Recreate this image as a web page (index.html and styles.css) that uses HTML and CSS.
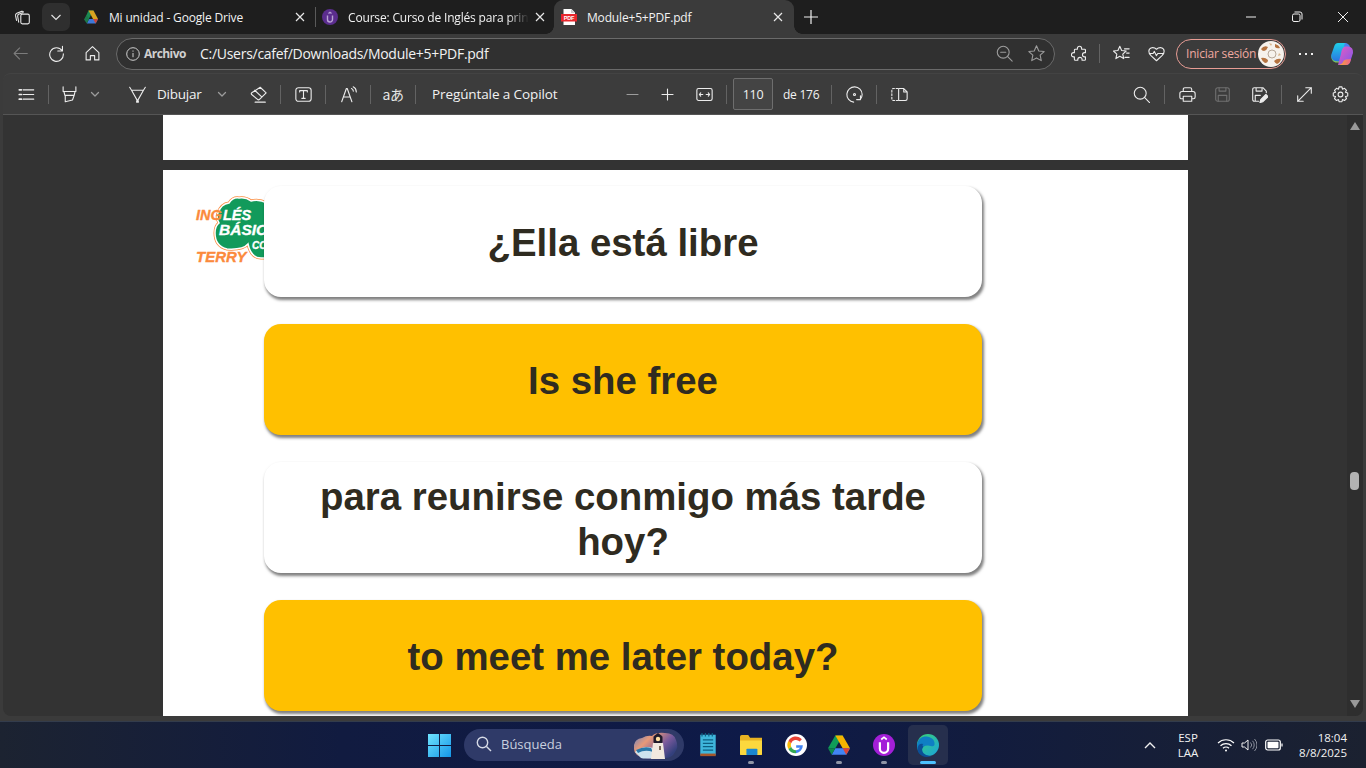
FILE: index.html
```html
<!DOCTYPE html>
<html lang="es">
<head>
<meta charset="utf-8">
<title>Module+5+PDF.pdf</title>
<link rel="stylesheet" href="styles.css">
</head>
<body>
<div class="tabbar">
  <span class="ic i20 first"><svg viewBox="0 0 20 20"><rect x="8" y="6" width="10" height="11.500" rx="1.800"/><path d="M5.500 15.500 4.300 8.500Q4 6.500 6 5.800l4.500-1.400M3 13.500 1.800 7.800Q1.500 5.800 3.300 5L9 2.800q1.300-.4 2 .6"/></svg></span>
  <span class="chevbtn"><svg viewBox="0 0 12 12"><path d="M1.500 4l4.500 4.500L10.500 4"/></svg></span>
  <div class="tab tab-a">
    <svg class="fav" viewBox="0 0 16 16"><path d="M5.500 1.500h5l-5 9H1.500z" fill="#1b8a52"/><path d="M5.500 1.500h5l4.500 8.500h-5z" fill="#d9a520"/><path d="M3.800 14.500l2.300-4.500h8.900l-2.300 4.500z" fill="#3d78d8"/><path d="M1 10.500l2.800 4 2.300-4.500-2.400-4z" fill="#1b7a4a"/><path d="M15 10l-2.300 4.500L10 10z" fill="#c9463a"/></svg>
    <span class="title">Mi unidad - Google Drive</span>
    <svg class="close" viewBox="0 0 10 10"><path d="M1 1l8 8M9 1l-8 8"/></svg>
  </div>
  <span class="tabsep"></span>
  <div class="tab tab-b">
    <svg class="fav" viewBox="0 0 16 16"><circle cx="8" cy="8" r="8" fill="#5b2d8e"/><path d="M5.500 6.500v4a2.500 2.500 0 0 0 5 0v-4M6.500 4.500 8 3.300l1.500 1.200" fill="none" stroke="#b9a4d4" stroke-width="1.400"/></svg>
    <span class="title fade">Course: Curso de Inglés para princ</span>
    <svg class="close" viewBox="0 0 10 10"><path d="M1 1l8 8M9 1l-8 8"/></svg>
  </div>
  <div class="tab tab-active">
    <svg class="fav" viewBox="0 0 16 16"><path d="M2.500 0h8l3.500 3.500V16h-11.500z" fill="#fff"/><path d="M10 0l4 4h-4z" fill="#ccc"/><rect x="0" y="5" width="16" height="7.500" fill="#e8262c"/><text x="8" y="11" class="pdftxt">PDF</text></svg>
    <span class="title">Module+5+PDF.pdf</span>
    <svg class="close" viewBox="0 0 10 10"><path d="M1 1l8 8M9 1l-8 8"/></svg>
  </div>
  <svg class="plus" viewBox="0 0 14 14"><path d="M7 0v14M0 7h14"/></svg>
  <div class="winctl">
    <span class="wc"><svg viewBox="0 0 12 12"><path d="M1 6h10"/></svg></span>
    <span class="wc"><svg viewBox="0 0 12 12"><rect x="1.500" y="3" width="7.500" height="7.500" rx="1.500"/><path d="M3.500 1h5.500a2 2 0 0 1 2 2v5.500"/></svg></span>
    <span class="wc"><svg viewBox="0 0 12 12"><path d="M1 1l10 10M11 1 1 11"/></svg></span>
  </div>
</div>

<div class="addr">
  <span class="ic i20 dim"><svg viewBox="0 0 20 20"><path d="M18 10H2.500M9 3.500 2.500 10 9 16.500"/></svg></span>
  <span class="ic i20 m16"><svg viewBox="0 0 20 20"><path d="M16.500 6.500A8 8 0 1 0 18 10.500M17 1.500V7h-5.500"/></svg></span>
  <span class="ic i20 m16"><svg viewBox="0 0 20 20"><path d="M2.500 9 10 2l7.500 7v8.500h-5v-5h-5v5h-5z"/></svg></span>
  <div class="pill">
    <svg class="infoic" viewBox="0 0 14 14"><circle cx="7" cy="7" r="6.300"/><path d="M7 6v4.200M7 3.500v1.200"/></svg>
    <span class="scheme">Archivo</span>
    <span class="url">C:/Users/cafef/Downloads/Module+5+PDF.pdf</span>
    <span class="pillend">
      <span class="ic i20 grey"><svg viewBox="0 0 20 20"><circle cx="8.500" cy="8.500" r="7"/><path d="M13.500 13.500l5.500 5.500M5.500 8.500h6"/></svg></span>
      <span class="ic i20 grey m12"><svg viewBox="0 0 20 20"><path d="M10 1l2.700 6 6.300.7-4.700 4.300 1.300 6.400-5.600-3.200-5.600 3.200 1.300-6.400L1 7.700 7.300 7z"/></svg></span>
    </span>
  </div>
  <span class="ic i20 m14"><svg viewBox="0 0 20 20"><path d="M7.500 4a2.500 2.500 0 0 1 5 0v1H16q1 0 1 1v3h-1a2.500 2.500 0 0 0 0 5h1v3q0 1-1 1h-3v-1a2.500 2.500 0 0 0-5 0v1H5q-1 0-1-1v-3H3a2.500 2.500 0 0 1 0-5h1V6q0-1 1-1h2.500z"/></svg></span>
  <span class="sep m10"></span>
  <span class="ic i20 m11"><svg viewBox="0 0 20 20"><path d="M8 1.500l2.200 5 5.300.6-4 3.600 1.100 5.300L8 13.300 3.400 16l1.100-5.300-4-3.600 5.300-.6zM13.500 4.500H19M16 9.500h3M14 14.500h5"/></svg></span>
  <span class="ic i20 m15"><svg viewBox="0 0 20 20"><path d="M3.500 12.500Q1 10 1 7.300 1 4 4.500 3.200 7.800 2.800 10 5q2.200-2.200 5.500-1.800Q19 4 19 7.300q0 2.700-2.500 5.200L10 18.500zM1.500 10H6l1.500-2.500 2.300 5 1.700-2.500h7"/></svg></span>
  <div class="signin"><span>Iniciar sesión</span>
    <svg class="avatar" viewBox="0 0 26 26"><circle cx="13" cy="13" r="13" fill="#f6f2ec"/><path d="M3 8q3-4 7-2-1 3-4 4-2 0-3-2zM17 3q4 1 5 4-3 1-5-1zM3 17q4-1 7 2 0 3-3 3-3-2-4-5zM16 20q3-3 7-2-1 4-4 5-2-1-3-3z" fill="#b57340"/><path d="M11 2l3 1-1 2zM21 12l2 2-3 1z" fill="#d8b48c"/><circle cx="14" cy="13" r="4" fill="none" stroke="#a79684" stroke-width=".8"/></svg>
  </div>
  <span class="dots"><i></i><i></i><i></i></span>
  <svg class="copilot" viewBox="0 0 24 24"><defs><linearGradient id="cpa" x1="0" y1="0" x2="0" y2="1"><stop offset="0" stop-color="#1fd0e8"/><stop offset="1" stop-color="#2a74e0"/></linearGradient><linearGradient id="cpb" x1="0" y1="0" x2="1" y2="1"><stop offset="0" stop-color="#ea5cc0"/><stop offset="1" stop-color="#7a58ec"/></linearGradient><linearGradient id="cpc" x1="0" y1="0" x2="1" y2="0"><stop offset="0" stop-color="#4fc86c"/><stop offset="1" stop-color="#f4c52e"/></linearGradient><linearGradient id="cpd" x1="0" y1="0" x2="1" y2="0"><stop offset="0" stop-color="#f4b02e"/><stop offset="1" stop-color="#f0608a"/></linearGradient></defs><path d="M1.200 13q-.4 6 4.300 7.500H13l2-5H6q-3 0-4.800-2.500z" fill="url(#cpc)"/><path d="M8 1h8l-3 14.500q-1 4-5 4-7-.5-6.800-6.500L4 5q1-4 4-4z" fill="url(#cpa)"/><path d="M15 1q4 .3 5 4l1 3-5 .5-2-5z" fill="#4a80ee"/><path d="M15.500 4.500h3q5 .6 4.500 6.500l-2.600 8q-1 4-4.400 4H8l3-11q1-7.500 4.500-7.500z" fill="url(#cpb)"/><path d="M8 23h8q3.500 0 4.500-4l.5-2-5 .5q-1.500 0-2.500 1.500-1 3.500-5.500 4z" fill="url(#cpd)"/></svg>
</div>

<div class="pdfbar">
  <span class="ic i20"><svg viewBox="0 0 20 20"><path d="M6 4.500h12.500M6 10h12.500M6 15.500h12.500"/><path class="fatdot" d="M1.500 4.500h2.500M1.500 10h2.500M1.500 15.500h2.500"/></svg></span>
  <span class="sep m12"></span>
  <span class="ic i20 m10"><svg viewBox="0 0 20 20"><path d="M2.500 1v5.500h15V1M3.500 6.500l1 4.500h11l1-4.500M5 11v7.500l8.500-2L15.500 11"/></svg></span>
  <span class="ic i12 m10 grey"><svg viewBox="0 0 12 12"><path d="M2.500 4.500 6 8l3.500-3.500"/></svg></span>
  <span class="ic i20 m26"><svg viewBox="0 0 20 20"><path d="M.8 1.500 3 5h14l2.200-3.500M3 5l7 12.500L17 5M9 17.500h2v1.500H9z"/></svg></span>
  <span class="lbl w50 m10">Dibujar</span>
  <span class="ic i12 m9 grey"><svg viewBox="0 0 12 12"><path d="M2.500 4.500 6 8l3.500-3.500"/></svg></span>
  <span class="ic i20 m20"><svg viewBox="0 0 20 20"><path d="M12 1.500 19 8l-7.500 7.500Q10 17 8.500 15.500L2 10q-1-1 0-2zM5.500 5l8 7.500M6 19h12"/></svg></span>
  <span class="sep m12"></span>
  <span class="ic i20 m12"><svg viewBox="0 0 20 20"><rect x="1" y="2" width="18" height="16" rx="3"/><path d="M5.500 7V5.500h9V7M10 5.500V14.500M8 14.500h4"/></svg></span>
  <span class="sep m12"></span>
  <span class="ic i20 m12"><svg viewBox="0 0 20 20"><path d="M2 18.500 7.500 3h1L14 18.500M4.300 13h7.400M13.500 3q2 .8 2.200 3M15.500 1q3.500 1.500 3.700 6"/></svg></span>
  <span class="sep m12"></span>
  <span class="trans m12">aあ</span>
  <span class="sep m12"></span>
  <span class="lbl w140 wide m16">Pregúntale a Copilot</span>
  <span class="ic i20 m50 grey"><svg viewBox="0 0 20 20"><path d="M3.500 10h13"/></svg></span>
  <span class="ic i20 m15"><svg viewBox="0 0 20 20"><path d="M3.500 10h13M10 3.500v13"/></svg></span>
  <span class="ic i20 m17"><svg viewBox="0 0 20 20"><rect x="1" y="3" width="18" height="14" rx="2"/><path d="M4 10h4M12 10h4M5.500 8 4 10l1.500 2M14.500 8l1.500 2-1.500 2"/></svg></span>
  <span class="sep m12"></span>
  <span class="pagebox m6">110</span>
  <span class="lbl small w36 m10">de 176</span>
  <span class="sep m12"></span>
  <span class="ic i20 m12"><svg viewBox="0 0 20 20"><path d="M9 19A9 9 0 1 1 19 10q0 3-2 5.500M17 11.500v4.500h-4.500"/><circle cx="10" cy="10" r="1.200"/></svg></span>
  <span class="sep m12"></span>
  <span class="ic i20 m12"><svg viewBox="0 0 20 20"><path d="M8 3H3Q1 3 1 5v10q0 2 2 2h5" stroke-dasharray="2 2"/><path d="M9 3h6l4 4v8q0 2-2 2H9zM15 3v4h4"/></svg></span>
  <div class="barend">
    <span class="ic i20"><svg viewBox="0 0 20 20"><circle cx="8.500" cy="8.500" r="7"/><path d="M13.500 13.500l6 6"/></svg></span>
    <span class="sep m13"></span>
    <span class="ic i20 m12"><svg viewBox="0 0 20 20"><path d="M5 6.500V4q0-2 2-2h6q2 0 2 2v2.500M5 15H3q-2 0-2-2V9q0-2.500 2.500-2.500h13Q19 6.500 19 9v4q0 2-2 2h-2M5 12h10v6H5z"/></svg></span>
    <span class="ic i20 m15 faint"><svg viewBox="0 0 20 20"><rect x="2" y="2" width="16" height="16" rx="2.500"/><path d="M6 2v4h8V2M5 18v-7h10v7"/></svg></span>
    <span class="ic i20 m17"><svg viewBox="0 0 20 20"><path d="M9 18H4q-2 0-2-2V4q0-2 2-2h10l4 4v2M6 2v4h7V2M5 18v-7h6"/><path d="M10.500 19.500l1-3.500 6-6 2.500 2.500-6 6z" fill="currentColor"/></svg></span>
    <span class="sep m12"></span>
    <span class="ic i20 m12"><svg viewBox="0 0 20 20"><path d="M11.500 2H18v6.500M18 2 2 18M2 11.500V18h6.500"/></svg></span>
    <span class="ic i20 m16"><svg viewBox="0 0 20 20"><circle cx="10" cy="10" r="2.800"/><path d="M8.300 1h3.400l.6 2.700 2.400-1 2.400 2.400-1.300 2.300 2.700.9v3.400l-2.700.7 1.300 2.300-2.400 2.400-2.400-1.200-.6 2.600H8.300l-.6-2.600-2.400 1.200-2.400-2.400 1.300-2.300-2.700-.7V8.300l2.700-.9-1.300-2.300 2.400-2.400 2.400 1z"/></svg></span>
  </div>
</div>

<div class="frame">
  <div class="viewer">
    <div class="page-prev"></div>
    <div class="page">
      <svg class="logo" viewBox="0 0 80 72">
        <path d="M25 19Q28 10 36 9 40 3 46 4 53 3 58 7 66 5 74 9V64H68Q58 64 55 50 50 56 34 55 22 52 22 39 22 32 26 29 23 24 25 19z" fill="#fff" stroke="#fb8a3c" stroke-width="3"/>
        <path d="M25 19Q28 10 36 9 40 3 46 4 53 3 58 7 66 5 74 9V64H68Q58 64 55 50 50 56 34 55 22 52 22 39 22 32 26 29 23 24 25 19z" fill="#129a5b" stroke="#fff" stroke-width="1.500"/>
        <text class="lg-o" x="3" y="26">ING</text>
        <text class="lg-w" x="30" y="26">LÉS</text>
        <text class="lg-w lg-b" x="26" y="41">BÁSIC</text>
        <text class="lg-w lg-s" x="59" y="55">CO</text>
        <text class="lg-o lg-t" x="3" y="68">TERRY</text>
      </svg>
      <div class="cards">
        <div class="card">¿Ella está libre</div>
        <div class="card gold">Is she free</div>
        <div class="card">para reunirse conmigo más tarde hoy?</div>
        <div class="card gold">to meet me later today?</div>
      </div>
    </div>
    <div class="scroll">
      <span class="arr up"></span>
      <span class="thumb"></span>
      <span class="arr down"></span>
    </div>
  </div>
</div>

<div class="taskbar">
  <svg class="win" viewBox="0 0 24 24"><defs><linearGradient id="wg" x1="0" y1="0" x2="1" y2="1"><stop offset="0" stop-color="#6fe4ff"/><stop offset="1" stop-color="#1496e8"/></linearGradient></defs><path d="M0 0h11.500v11.500H0zM12.500 0H24v11.500H12.500zM0 12.500h11.500V24H0zM12.500 12.500H24V24H12.500z" fill="url(#wg)"/></svg>
  <div class="search">
    <svg class="sic" viewBox="0 0 16 16"><circle cx="6.500" cy="6.500" r="5.200"/><path d="M10.500 10.500l4.500 4.500"/></svg>
    <span>Búsqueda</span>
    <svg class="lighthouse" viewBox="0 0 46 28"><defs><linearGradient id="lh" x1="0" y1="0" x2="1" y2=".6"><stop offset="0" stop-color="#5b7fc8"/><stop offset=".35" stop-color="#e89a78"/><stop offset=".7" stop-color="#7a5a9c"/><stop offset="1" stop-color="#33407c"/></linearGradient></defs><path d="M1 14q1-6 8-7 5-3 10-2 4-4 13-3 9 0 11 7 3 7-1 12-3 6-10 6-14 1-20 0Q1 25 1 18z" fill="url(#lh)"/><path d="M2 21q8-7 18-4l4 10q-13 1-16 0z" fill="#cfe4ee"/><path d="M3 19q8-4 15-2l2 4q-8-3-15 1z" fill="#2a78a8"/><path d="M20 12h10l2 16H18z" fill="#f1e9df"/><path d="M26 15h2v4h-2z" fill="#7a6a5a"/><rect x="20.500" y="5" width="9" height="7" rx="1" fill="#1e1a2a"/><circle cx="25" cy="8" r="2.200" fill="#ffe0a0"/><path d="M21 5l4-3 4 3z" fill="#1e1a2a"/></svg>
  </div>
  <svg class="tb m13" viewBox="0 0 22 28"><rect x="2" y="2" width="18" height="24" fill="#3fb6dc"/><path d="M2 24h18v3H2z" fill="#a5562a"/><path d="M5 8h12M5 12h12M5 16h12M5 20h12" stroke="#0d5f82" stroke-width="1.400"/><path d="M4 0v4M8 0v4M12 0v4M16 0v4" stroke="#0d5f82" stroke-width="1.400"/></svg>
  <span class="tbw m21"><svg class="tb" viewBox="0 0 24 22"><path d="M0 2q0-2 2-2h7l2 3h13v19H0z" fill="#e8b322"/><path d="M0 6h24v14q0 2-2 2H2q-2 0-2-2z" fill="#fcd83e"/><rect x="7" y="15" width="12" height="7" rx="1" fill="#1b87d0"/></svg><i class="mark"></i></span>
  <span class="tbw m23"><svg class="tb" viewBox="0 0 24 24"><circle cx="12" cy="12" r="12" fill="#fff"/><path d="M19.500 12.200h-7.300v2.800h4.200a4.800 4.800 0 0 1-4.400 2.700V21a9 9 0 0 0 7.500-8.800z" fill="#4285f4"/><path d="M12 17.700A5.700 5.700 0 0 1 6.700 14l-3 2.300A9 9 0 0 0 12 21z" fill="#34a853"/><path d="M6.700 14a5.700 5.700 0 0 1 0-4l-3-2.300a9 9 0 0 0 0 8.600z" fill="#fbbc05"/><path d="M6.700 10A5.700 5.700 0 0 1 16 8.100l2.400-2.400A9 9 0 0 0 3.700 7.700z" fill="#ea4335"/></svg></span>
  <span class="tbw m21"><svg class="tb" viewBox="0 0 24 22"><path d="M8 .5h8L8 14.500H0z" fill="#0f9d58"/><path d="M8 .5h8l8 14h-8z" fill="#f4b400"/><path d="M4 21.500 8 14.500h16l-4 7z" fill="#4285f4"/><path d="M0 14.500 4 21.500 8 14.500z" fill="#0f8a4c"/><path d="M24 14.500l-4 7-4-7z" fill="#db4437"/></svg><i class="mark"></i></span>
  <span class="tbw m23"><svg class="tb" viewBox="0 0 24 24"><circle cx="12" cy="12" r="12" fill="#a31fd8"/><path d="M7.500 9v7a4.500 4.500 0 0 0 9 0V9" fill="none" stroke="#fff" stroke-width="2.400"/><path d="M9 6l3-2.500L15 6" fill="none" stroke="#fff" stroke-width="1.800"/></svg><i class="mark"></i></span>
  <span class="edge m13"><svg class="tb" viewBox="0 0 24 24"><defs><linearGradient id="eg" x1="0" y1="0" x2="1" y2="1"><stop offset="0" stop-color="#3bd46f"/><stop offset="1" stop-color="#1aa3dd"/></linearGradient></defs><circle cx="12" cy="12" r="12" fill="url(#eg)"/><path d="M0 12C1 4 7 2 12 3c5 1 8 5 7 9q-1 2-4 1-5-1-8 1-3 3 0 7 3 3 7 3-14 1-14-12z" fill="#0f7fc4"/><path d="M7 14q-3 3 0 7 3 3 7 3h2q-9 3-14-3-3-5 0-9 2-2 5-1-2 1-0 3z" fill="#0b4f96"/></svg><i class="bar"></i></span>
  <div class="tray">
    <svg class="chev" viewBox="0 0 12 8"><path d="M1 7l5-5 5 5"/></svg>
    <span class="lang m17"><span>ESP</span><span>LAA</span></span>
    <svg class="wifi m14" viewBox="0 0 18 14"><path d="M1 5a11.500 11.500 0 0 1 16 0M3.500 7.800a8 8 0 0 1 11 0M6 10.300a4.300 4.300 0 0 1 6 0"/><circle cx="9" cy="12.500" r="1" fill="#fff" stroke="none"/></svg>
    <svg class="vol m6" viewBox="0 0 16 14"><path d="M1 5v4h2.500L7 12V2L3.500 5z"/><path class="vol2" d="M9.500 4.500a3.500 3.500 0 0 1 0 5M11.500 2.800a6 6 0 0 1 0 8.400M13.500 1a8.500 8.500 0 0 1 0 12"/></svg>
    <svg class="batt m8" viewBox="0 0 18 12"><rect x=".7" y="1" width="14.600" height="10" rx="2"/><rect x="2.500" y="2.800" width="11" height="6.400" rx=".8" fill="#fff" stroke="none"/><path d="M17 4.500v3"/></svg>
    <span class="clock m8"><span>18:04</span><span>8/8/2025</span></span>
  </div>
</div>
</body>
</html>
```

FILE: styles.css
```css
* { box-sizing: border-box; }
html, body { margin: 0; padding: 0; width: 1366px; height: 768px; overflow: hidden; background: #3b3b3b; }
body { font-family: "Open Sans", "Noto Sans", sans-serif; color: #f2f2f2; display: flex; flex-direction: column; }

svg { display: block; }
.ic { display: flex; align-items: center; justify-content: center; flex: none; color: #ececec; }
.ic svg { fill: none; stroke: currentColor; stroke-width: 1.300; stroke-linejoin: round; stroke-linecap: round; }
.i20 { width: 20px; height: 20px; }
.i20 svg { width: 17px; height: 17px; }
.i12 { width: 12px; height: 12px; }
.i12 svg { width: 12px; height: 12px; }
.grey { color: #9c9c9c; }
.dim { color: #7c7c7c; }
.faint { color: #6f6f6f; }
.fatdot { stroke-width: 2; }
.sep { flex: none; width: 1px; height: 19px; background: #636363; }

.m6 { margin-left: 6px; } .m8 { margin-left: 8px; } .m9 { margin-left: 9px; }
.m10 { margin-left: 10px; } .m11 { margin-left: 11px; } .m12 { margin-left: 12px; }
.m13 { margin-left: 13px; } .m14 { margin-left: 14px; } .m15 { margin-left: 15px; }
.m16 { margin-left: 16px; } .m17 { margin-left: 17px; } .m20 { margin-left: 20px; }
.m21 { margin-left: 21px; } .m23 { margin-left: 23px; } .m26 { margin-left: 26px; }
.m50 { margin-left: 50px; }

/* Tab strip */
.tabbar { height: 34px; flex: none; background: #1e1e1e; display: flex; align-items: center; padding-left: 12px; }
.first { color: #e6e6e6; }
.chevbtn { width: 28px; height: 28px; margin-left: 10px; margin-right: 6px; flex: none; border-radius: 7px; background: #2f2f2f; display: flex; align-items: center; justify-content: center; }
.chevbtn svg { width: 12px; height: 12px; fill: none; stroke: #e0e0e0; stroke-width: 1.200; }
.tab { height: 34px; flex: none; display: flex; align-items: center; position: relative; font-size: 12px; letter-spacing: -.17px; }
.tab-a { width: 239px; padding: 0 7px; }
.tab-b { width: 238px; padding: 0 6px; }
.tab-active { width: 240px; padding: 0 8px 0 7px; background: #3b3b3b; border-radius: 9px 9px 0 0; }
.tab-active::before, .tab-active::after { content: ""; position: absolute; bottom: 0; width: 8px; height: 8px; }
.tab-active::before { left: -8px; background: radial-gradient(circle at 0 0, transparent 7.500px, #3b3b3b 8px); }
.tab-active::after { right: -8px; background: radial-gradient(circle at 100% 0, transparent 7.500px, #3b3b3b 8px); }
.fav { width: 16px; height: 16px; flex: none; }
.pdftxt { font: bold 5.500px "Liberation Sans", sans-serif; fill: #fff; text-anchor: middle; }
.title { margin-left: 10px; white-space: nowrap; overflow: hidden; flex: 1; }
.fade { -webkit-mask-image: linear-gradient(90deg, #000 88%, transparent 100%); mask-image: linear-gradient(90deg, #000 88%, transparent 100%); }
.close { width: 10px; height: 10px; margin: 0 3px 0 6px; flex: none; fill: none; stroke: #e8e8e8; stroke-width: 1.200; }
.tabsep { width: 1px; height: 20px; flex: none; background: #5a5a5a; }
.plus { width: 14px; height: 14px; margin-left: 10px; flex: none; fill: none; stroke: #f0f0f0; stroke-width: 1.200; }
.winctl { margin-left: auto; display: flex; }
.wc { width: 46px; height: 34px; display: flex; align-items: center; justify-content: center; }
.wc svg { width: 12px; height: 12px; fill: none; stroke: #f0f0f0; stroke-width: 1; }

/* Address row */
.addr { height: 39px; flex: none; background: #3b3b3b; display: flex; align-items: center; padding-left: 10px; }
.pill { width: 939px; height: 32px; margin-left: 14px; flex: none; border: 1px solid #6a6a6a; border-radius: 16px; background: #303030; display: flex; align-items: center; padding: 0 8px 0 9px; }
.infoic { width: 14px; height: 14px; flex: none; fill: none; stroke: #cfcfcf; stroke-width: 1; }
.scheme { margin-left: 4px; width: 56px; font-size: 12px; font-weight: 700; color: #cfcfcf; letter-spacing: -.55px; }
.url { font-size: 14px; color: #f2f2f2; letter-spacing: -.28px; white-space: nowrap; }
.pillend { margin-left: auto; display: flex; }
.signin { width: 110px; height: 30px; margin-left: 10px; flex: none; border: 1px solid #e79c94; border-radius: 15px; display: flex; align-items: center; justify-content: space-between; padding: 0 1px 0 9px; font-size: 12px; letter-spacing: -.2px; color: #f0a9a0; }
.avatar { width: 26px; height: 26px; }
.dots { margin-left: 13px; width: 14px; display: flex; justify-content: space-between; flex: none; }
.dots i { width: 2px; height: 2px; background: #f0f0f0; }
.copilot { width: 24px; height: 24px; margin-left: 17px; flex: none; }

/* PDF toolbar */
.pdfbar { height: 42px; flex: none; margin: 0 3px; background: #3c3c3c; border-top: 1px solid #434343; border-bottom: 1px solid #555; border-radius: 8px 8px 0 0; display: flex; align-items: center; padding: 0 13px; }
.lbl { font-size: 13.500px; color: #f2f2f2; white-space: nowrap; letter-spacing: -.25px; flex: none; }
.wide { letter-spacing: -.1px; }
.small { font-size: 12px; }
.w50 { width: 50px; }
.w140 { width: 140px; }
.w36 { width: 36px; }
.trans { width: 20px; flex: none; display: flex; justify-content: center; font-family: "Noto Sans CJK JP", "Open Sans", sans-serif; font-size: 14px; letter-spacing: -.5px; color: #e6e6e6; white-space: nowrap; }
.pagebox { width: 40px; height: 32px; flex: none; border: 1px solid #6e6e6e; border-radius: 2px; background: #444; display: flex; align-items: center; justify-content: center; font-size: 12.500px; letter-spacing: -.3px; }
.barend { margin-left: auto; display: flex; align-items: center; }

/* Document viewport */
.frame { height: 606px; flex: none; padding: 0 3px 5px; }
.viewer { position: relative; height: 601px; background: #333; overflow: hidden; padding: 0 175px 0 160px; border-radius: 0 0 8px 8px; }
.page-prev { height: 45px; background: #fff; }
.page { position: relative; margin-top: 10px; height: 546px; background: #fff; padding: 16px 0 0 101px; }
.logo { position: absolute; left: 30px; top: 24px; width: 80px; height: 72px; }
.lg-o { font: italic bold 14.500px "Liberation Sans", sans-serif; fill: #fb8a3c; stroke: #fb8a3c; stroke-width: .35px; }
.lg-w { font: italic bold 14.500px "Liberation Sans", sans-serif; fill: #fff; stroke: #fff; stroke-width: .35px; }
.lg-t { font-size: 15px; }
.lg-b { font-size: 15.500px; }
.lg-s { font-size: 10px; }
.cards { position: relative; width: 718px; display: flex; flex-direction: column; gap: 27px; }
.card { height: 111px; background: #fff; border-radius: 17px; box-shadow: 1.500px 2.500px 3px rgba(0,0,0,.5); display: flex; align-items: center; justify-content: center; text-align: center; padding: 2px 40px 0; font-family: "Liberation Sans", Arial, sans-serif; font-weight: 700; font-size: 38.400px; line-height: 45px; color: #2f2b20; }
.gold { background: #ffc000; }
.scroll { position: absolute; right: 0; top: 0; bottom: 0; width: 16px; background: #2e2e2e; }
.arr { position: absolute; left: 3px; width: 0; height: 0; border-left: 5px solid transparent; border-right: 5px solid transparent; }
.up { top: 7px; border-bottom: 8px solid #999; }
.down { bottom: 8px; border-top: 8px solid #999; }
.thumb { position: absolute; left: 3px; top: 357px; width: 9px; height: 18px; border-radius: 4px; background: #b3b3b3; }

/* Taskbar */
.taskbar { height: 47px; flex: none; display: flex; align-items: center; padding-left: 428px; background: linear-gradient(90deg, #1c2331 0%, #111b40 25%, #0e1a48 55%, #121c3e 72%, #1b2130 100%); border-top: 1px solid #333c4c; }
.win { width: 23px; height: 23px; flex: none; }
.search { width: 220px; height: 32px; margin-left: 13px; flex: none; border-radius: 16px; background: #2f3a68; display: flex; align-items: center; padding: 0 0 2px 12px; font-size: 13px; color: #c9cfdf; position: relative; }
.sic { width: 16px; height: 16px; margin-right: 9px; fill: none; stroke: #d6dae6; stroke-width: 1.400; }
.lighthouse { position: absolute; right: 5px; top: 2px; width: 46px; height: 28px; }
.tb { width: 22px; height: 24px; flex: none; }
.tbw { position: relative; width: 22px; height: 24px; flex: none; }
.tbw .tb { width: 22px; height: 24px; }
.mark { position: absolute; left: 8px; bottom: -7px; width: 6px; height: 3px; border-radius: 2px; background: #8f95a6; }
.edge { position: relative; width: 40px; height: 40px; flex: none; border-radius: 5px; background: #262f4d; display: flex; align-items: center; justify-content: center; }
.bar { position: absolute; left: 12px; bottom: 1px; width: 16px; height: 3px; border-radius: 2px; background: #4cc2ff; }
.tray { margin-left: auto; display: flex; align-items: center; padding-right: 19px; font-size: 11.500px; color: #f2f2f2; }
.chev { width: 12px; height: 8px; fill: none; stroke: #f0f0f0; stroke-width: 1.400; }
.lang { width: 30px; display: flex; flex-direction: column; align-items: center; line-height: 15.500px; }
.wifi { width: 18px; height: 14px; fill: none; stroke: #fff; stroke-width: 1.200; }
.vol { width: 16px; height: 14px; fill: none; stroke: #f0f0f0; stroke-width: 1; }
.vol2 { stroke: #8a8f9c; }
.batt { width: 18px; height: 12px; fill: none; stroke: #fff; stroke-width: 1.200; }
.clock { width: 56px; display: flex; flex-direction: column; align-items: flex-end; line-height: 15.500px; white-space: nowrap; }
```
